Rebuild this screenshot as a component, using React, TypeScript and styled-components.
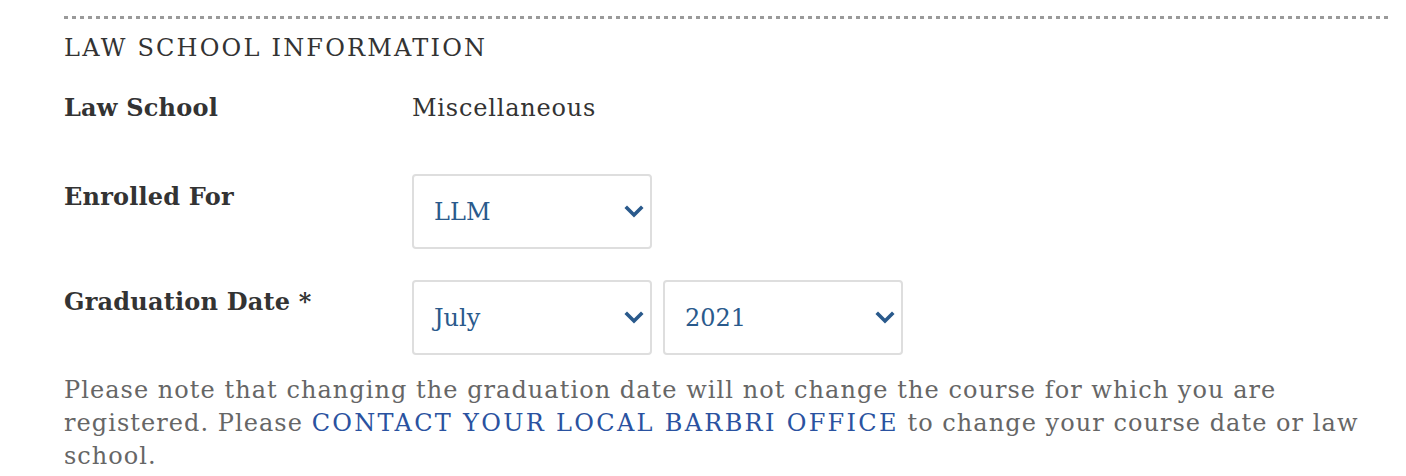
import { createGlobalStyle, styled } from "styled-components";

const GlobalStyle = createGlobalStyle`
  body {
    margin: 0;
    background: #ffffff;
    font-family: "DejaVu Serif", serif;
  }
`;

const Section = styled.section`
  padding: 16px 18px 0 64px;
  color: #333333;
`;

const Divider = styled.div`
  height: 3px;
  background-image: linear-gradient(to right, #9a9a9a 0 4px, transparent 4px 8px);
  background-size: 8px 3px;
`;

const Heading = styled.h2`
  margin: 14px 0 0;
  font-size: 24px;
  font-weight: normal;
  letter-spacing: 2.2px;
  line-height: 30px;
  text-transform: uppercase;
  color: #333333;
`;

const Row = styled.div<{ $top: number }>`
  display: grid;
  grid-template-columns: 348px auto;
  align-items: start;
  margin-top: ${p => p.$top}px;
`;

const Label = styled.div<{ $pad?: number }>`
  font-size: 24px;
  font-weight: bold;
  letter-spacing: 0.2px;
  line-height: 30px;
  padding-top: ${p => p.$pad ?? 0}px;
`;

const Value = styled.div`
  font-size: 24px;
  letter-spacing: 0.8px;
  line-height: 30px;
`;

const Selects = styled.div`
  display: flex;
  gap: 11px;
`;

const SelectBox = styled.div`
  box-sizing: border-box;
  width: 240px;
  height: 75px;
  border: 2px solid #dedede;
  border-radius: 4px;
  padding: 0 6px 0 20px;
  display: flex;
  align-items: center;
  justify-content: space-between;
  color: #2a5a8c;
  font-size: 24px;
`;

const Note = styled.p`
  margin: 19px 0 0;
  font-size: 24px;
  letter-spacing: 1.05px;
  line-height: 33px;
  color: #666666;
`;

const Link = styled.a`
  color: #2a52a0;
  letter-spacing: 2.3px;
  text-decoration: none;
`;

function Chevron() {
  return (
    <svg width="20" height="14" viewBox="0 0 20 14">
      <polyline
        points="3,3 10,10 17,3"
        fill="none"
        stroke="#2a5a8c"
        strokeWidth="3.6"
        strokeLinecap="square"
      />
    </svg>
  );
}

function Select({ value }: { value: string }) {
  return (
    <SelectBox>
      <span>{value}</span>
      <Chevron />
    </SelectBox>
  );
}

export default function App() {
  return (
    <>
      <GlobalStyle />
      <Section>
        <Divider />
        <Heading>Law School Information</Heading>
        <Row $top={30}>
          <Label>Law School</Label>
          <Value>Miscellaneous</Value>
        </Row>
        <Row $top={51}>
          <Label $pad={8}>Enrolled For</Label>
          <Selects>
            <Select value="LLM" />
          </Selects>
        </Row>
        <Row $top={31}>
          <Label $pad={7}>Graduation Date *</Label>
          <Selects>
            <Select value="July" />
            <Select value="2021" />
          </Selects>
        </Row>
        <Note>
          Please note that changing the graduation date will not change the course for which you are
          registered. Please <Link href="#">CONTACT YOUR LOCAL BARBRI OFFICE</Link> to change your
          course date or law school.
        </Note>
      </Section>
    </>
  );
}
